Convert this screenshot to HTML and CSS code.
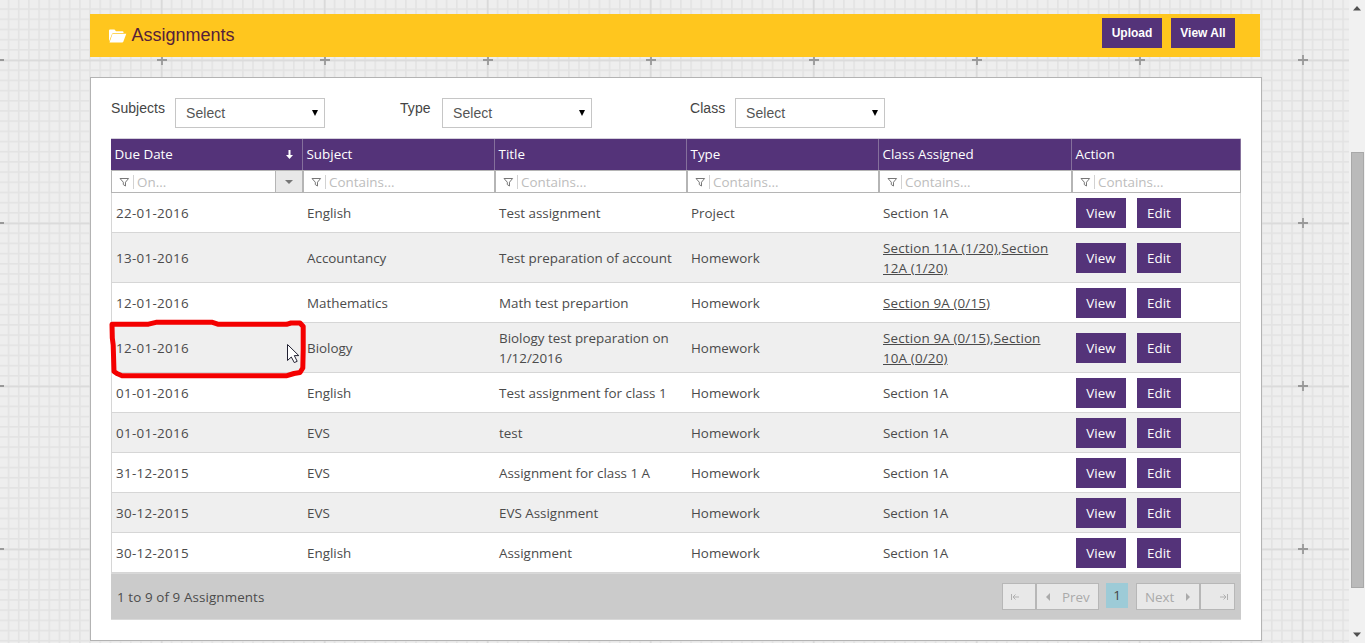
FILE: index.html
```
<!DOCTYPE html>
<html lang="en">
<head>
<meta charset="utf-8">
<title>Assignments</title>
<link rel="stylesheet" href="styles.css">
</head>
<body>
<svg class="backdrop" width="1349" height="643" aria-hidden="true">
  <defs>
    <pattern id="minor" x="-2.5" y="59.2" width="10.1875" height="10.1875" patternUnits="userSpaceOnUse">
      <path d="M.8 0V10.2M0 .8H10.2" stroke="#e3e3e3" stroke-width="1.6"/>
    </pattern>
    <pattern id="major" x="-2" y="59.8" width="163" height="163" patternUnits="userSpaceOnUse">
      <path d="M.8 0V163M0 .8H163" stroke="#dadada" stroke-width="1.6"/>
    </pattern>
    <pattern id="plus" x="-82" y="-21" width="163" height="163" patternUnits="userSpaceOnUse">
      <path d="M81 76V86M76 81H86" stroke="#999" stroke-width="1.8"/>
    </pattern>
  </defs>
  <rect width="1349" height="643" fill="#eee"/>
  <rect width="1349" height="643" fill="url(#minor)"/>
  <rect width="1349" height="643" fill="url(#major)"/>
  <rect width="1349" height="643" fill="url(#plus)"/>
</svg>
<svg width="0" height="0" class="defs">
  <symbol id="funnel" viewBox="0 0 11 10"><path d="M1 1.5H9.6L6.5 5.2V9L4.3 7.6V5.2Z" fill="none" stroke="#777" stroke-width="1"/></symbol>
</svg>
<div class="page">
  <header class="titlebar">
    <svg class="folder" width="18" height="14" viewBox="0 0 18 14"><path d="M0 12.5V1.5Q0 .5 1 .5H5.5L7 2.2H13.5Q14.5 2.2 14.5 3.2V4H4.5Q3.5 4 3 5Z" fill="#fff"/><path d="M.5 13.5L3.5 4.8H17.3L14.3 12.8Q14 13.5 13.2 13.5Z" fill="#fff"/></svg>
    <h1>Assignments</h1>
    <div class="tools"><button>Upload</button><button>View All</button></div>
  </header>
  <main class="panel">
    <div class="filters">
      <div class="field f1"><label>Subjects</label><div class="select">Select<i></i></div></div>
      <div class="field f2"><label>Type</label><div class="select">Select<i></i></div></div>
      <div class="field f3"><label>Class</label><div class="select">Select<i></i></div></div>
    </div>
    <div class="grid">
      <div class="row head">
        <div>Due Date<svg class="sort" width="7" height="9" viewBox="0 0 7 9"><path d="M2.5 0H4.5V5H7L3.5 9L0 5H2.5Z" fill="#fff"/></svg></div><div>Subject</div><div>Title</div><div>Type</div><div>Class Assigned</div><div>Action</div>
      </div>
      <div class="row search">
        <div><svg width="11" height="10"><use href="#funnel"/></svg><b></b>On...<span class="drop"><i></i></span></div>
        <div><svg width="11" height="10"><use href="#funnel"/></svg><b></b>Contains...</div>
        <div><svg width="11" height="10"><use href="#funnel"/></svg><b></b>Contains...</div>
        <div><svg width="11" height="10"><use href="#funnel"/></svg><b></b>Contains...</div>
        <div><svg width="11" height="10"><use href="#funnel"/></svg><b></b>Contains...</div>
        <div><svg width="11" height="10"><use href="#funnel"/></svg><b></b>Contains...</div>
      </div>
      <div class="row item"><div>22-01-2016</div><div>English</div><div>Test assignment</div><div>Project</div><div>Section 1A</div><div class="act"><button>View</button><button>Edit</button></div></div>
      <div class="row item tall"><div>13-01-2016</div><div>Accountancy</div><div>Test preparation of account</div><div>Homework</div><div class="sec"><p><u>Section 11A (1/20)</u>,<u>Section<br>12A (1/20)</u></p></div><div class="act"><button>View</button><button>Edit</button></div></div>
      <div class="row item"><div>12-01-2016</div><div>Mathematics</div><div>Math test prepartion</div><div>Homework</div><div class="sec"><u>Section 9A (0/15)</u></div><div class="act"><button>View</button><button>Edit</button></div></div>
      <div class="row item tall"><div>12-01-2016</div><div>Biology</div><div><p>Biology test preparation on<br>1/12/2016</p></div><div>Homework</div><div class="sec"><p><u>Section 9A (0/15)</u>,<u>Section<br>10A (0/20)</u></p></div><div class="act"><button>View</button><button>Edit</button></div></div>
      <div class="row item"><div>01-01-2016</div><div>English</div><div>Test assignment for class 1</div><div>Homework</div><div>Section 1A</div><div class="act"><button>View</button><button>Edit</button></div></div>
      <div class="row item"><div>01-01-2016</div><div>EVS</div><div>test</div><div>Homework</div><div>Section 1A</div><div class="act"><button>View</button><button>Edit</button></div></div>
      <div class="row item"><div>31-12-2015</div><div>EVS</div><div>Assignment for class 1 A</div><div>Homework</div><div>Section 1A</div><div class="act"><button>View</button><button>Edit</button></div></div>
      <div class="row item"><div>30-12-2015</div><div>EVS</div><div>EVS Assignment</div><div>Homework</div><div>Section 1A</div><div class="act"><button>View</button><button>Edit</button></div></div>
      <div class="row item"><div>30-12-2015</div><div>English</div><div>Assignment</div><div>Homework</div><div>Section 1A</div><div class="act"><button>View</button><button>Edit</button></div></div>
      <div class="foot">
        <span>1 to 9 of 9 Assignments</span>
        <div class="pager">
          <div class="pg first"><svg width="9" height="6" viewBox="0 0 9 6"><path d="M.5 0V6M2 3H8M4.5 .5L2 3L4.5 5.5" fill="none" stroke="#b0b0b0"/></svg></div>
          <div class="pg prev"><svg width="4" height="8" viewBox="0 0 4 8"><path d="M4 0V8L0 4Z" fill="#aaa"/></svg>Prev</div>
          <div class="current">1</div>
          <div class="pg next">Next<svg width="4" height="8" viewBox="0 0 4 8"><path d="M0 0V8L4 4Z" fill="#aaa"/></svg></div>
          <div class="pg last"><svg width="9" height="6" viewBox="0 0 9 6"><path d="M8.5 0V6M1 3H7M4.5 .5L7 3L4.5 5.5" fill="none" stroke="#b0b0b0"/></svg></div>
        </div>
      </div>
    </div>
  </main>
</div>
<div class="scrollbar">
  <svg width="8" height="5" viewBox="0 0 8 5"><path d="M0 4.5L4 0L8 4.5Z" fill="#505050"/></svg>
  <div class="thumb"></div>
  <svg width="8" height="5" viewBox="0 0 8 5"><path d="M0 .5L4 5L8 .5Z" fill="#505050"/></svg>
</div>
<svg class="marker" width="204" height="64" viewBox="106 317 204 64">
  <path d="M112 324.2H148.5L156 322.3H212.5L218.5 324.3H286.5L291 323H300L303.2 326.5V350L302.8 368L300 372.5L294 373.5L287 375.7H122L117.5 373.8L114 371.5L113.2 345L112.3 338Z" fill="none" stroke="#f40000" stroke-width="5" stroke-linejoin="round"/>
  <path d="M287.5 344.5V360.5L291.3 357L294.3 362.6L297.2 361.3L294.3 355.6H298.8Z" fill="#fff" stroke="#223" stroke-width="1"/>
</svg>
</body>
</html>
```
FILE: styles.css
```
* { box-sizing: border-box; }
body { margin: 0; width: 1365px; height: 643px; overflow: hidden; display: flex; background: #eee; font-family: "Open Sans", "Noto Sans", sans-serif; font-size: 13.4px; color: #4b4b4b; }
.backdrop { position: absolute; left: 0; top: 0; z-index: -1; }
.defs { position: absolute; }
.page { width: 1349px; padding: 14px 0 0 90px; }
button { border: 0; padding: 0; background: #543379; color: #fff; height: 30px; font: inherit; letter-spacing: inherit; }

.titlebar { width: 1170px; height: 43px; background: #ffc61e; display: flex; align-items: center; padding: 0 25px 0 19px; }
.titlebar h1 { margin: -2px 0 0 4.5px; font: 18px/22px "Liberation Sans", Arial, sans-serif; color: #55203a; }
.folder { margin-top: 1px; }
.tools { margin: -5px 0 0 auto; display: flex; gap: 9px; font: bold 12px "Liberation Sans", Arial, sans-serif; }
.tools button { width: 60px; }
.tools button + button { width: 64px; }

.panel { margin-top: 20px; width: 1172px; height: 564px; border: 1px solid #b3b3b3; background: #fff; padding: 20px; }
.filters { display: flex; height: 40px; font: 14px/20px "Liberation Sans", Arial, sans-serif; color: #444; letter-spacing: .05px; }
.field { display: flex; align-items: flex-start; justify-content: space-between; }
.f1 { width: 214px; }
.f2 { width: 192px; margin-left: 75px; }
.f3 { width: 195px; margin-left: 98px; }
.select { width: 150px; height: 30px; border: 1px solid #c6c6c6; padding: 4px 6px 4px 10px; display: flex; align-items: center; justify-content: space-between; color: #555; }
.select i { border: 3.5px solid transparent; border-top: 6px solid #000; border-bottom: 0; }

.grid { width: 1130px; height: 482px; display: flex; flex-direction: column; border-top: 1px solid #d4cfdb; }
.row { display: grid; grid-template-columns: 192px 192px 192px 192px 193px 169px; flex: none; }
.row > div { display: flex; align-items: center; padding-left: 4px; line-height: 20px; }
.row p { margin: 0; }
.head { height: 31px; background: #543379; color: #fff; }
.head > div { border-right: 1px solid #85709c; padding: 0 0 1px 3.5px; }
.sort { margin: 0 9px 0 auto; }
.search { height: 23px; color: #bdbdbd; }
.search > div { border: 1px solid #b5b5b5; padding-left: 7px; }
.search b { width: 1px; height: 14px; background: #d2d2d2; margin: 0 3px; }
.drop { margin-left: auto; width: 27px; height: 21px; border-left: 1px solid #b5b5b5; background: #e8e8e8; display: flex; align-items: center; justify-content: center; }
.drop i { border: 4px solid transparent; border-top-color: #777; border-bottom: 0; }
.item { height: 40px; border: solid #d6d6d6; border-width: 0 1px 1px; }
.item > div { padding-left: 3px; }
.item > div:first-child { letter-spacing: .3px; padding-left: 4px; }
.item > .sec { letter-spacing: .15px; }
.item:nth-child(even) { background: #efefef; }
.item.tall { height: 50px; }
.item .act { gap: 11px; }
.act button { width: 50px; }
.act button + button { width: 44px; }
.foot { height: 47px; flex: none; border-top: 1px solid #d9d9d9; border-bottom: 1px solid #d9d9d9; background: #cbcbcb; display: flex; align-items: center; justify-content: space-between; padding: 0 6px; }
.foot > span { letter-spacing: .1px; }
.pager { display: flex; align-items: center; color: #aaa; }
.pg { height: 27px; border: 1px solid #b7b7b7; background: #e8e8e8; display: flex; align-items: center; }
.first { width: 34px; padding-left: 8px; }
.prev { width: 63px; padding-left: 9px; gap: 12px; }
.current { width: 22px; height: 25px; line-height: 25px; margin: 0 8px 0 7px; text-align: center; background: #9dcbd7; color: #444; position: relative; top: -1px; }
.next { width: 64px; padding-left: 8px; gap: 12px; }
.last { width: 35px; padding-left: 18px; }

.scrollbar { width: 16px; height: 643px; background: #f1f1f1; display: flex; flex-direction: column; align-items: center; justify-content: space-between; padding: 6px 0; }
.thumb { width: 13px; height: 436px; margin: 97px 0 0 1px; background: #bababa; border: 1px solid #a8a8a8; }
.marker { position: absolute; left: 106px; top: 317px; }
```
